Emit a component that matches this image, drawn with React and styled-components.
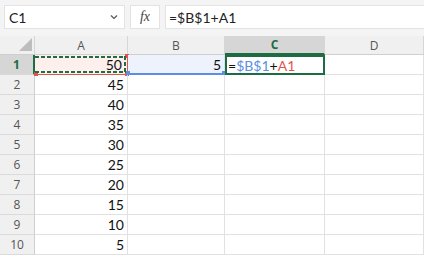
import React from 'react'
import styled, { createGlobalStyle, css } from 'styled-components'

const GREEN = '#1e6c41'
const BLUE = '#5b8ee6'
const RED = '#e4534b'
const GRID = '#e1e1e1'

const GlobalStyle = createGlobalStyle`
  html, body { margin: 0; padding: 0; background: #fff; }
  body { font-family: Lato, "Open Sans", "Liberation Sans", sans-serif; }
`

const Sheet = styled.div`
  width: 424px;
  height: 257px;
  overflow: hidden;
  background: #fff;
`

const Toolbar = styled.div`
  height: 36px;
  box-sizing: border-box;
  padding: 5px 0 7px 4px;
  background: #f4f4f4;
  display: flex;
  gap: 5px;
`

const Box = styled.div`
  background: #fff;
  border: 1px solid #e3e3e3;
  box-sizing: border-box;
  display: flex;
  align-items: center;
  font-size: 14px;
  color: #222;
`

const NameBox = styled(Box)`
  width: 121px;
  padding: 0 6px 0 4px;
  justify-content: space-between;
`

const FxBox = styled(Box)`
  width: 30px;
  justify-content: center;
  font-family: "Liberation Serif", serif;
  font-style: italic;
  font-size: 14px;
  color: #444;
`

const FormulaBox = styled(Box)`
  flex: 1;
  padding-left: 3px;
  border-right: none;
`

const Grid = styled.div`
  display: grid;
  grid-template-columns: 35px 93px 97px 100px 1fr;
  grid-template-rows: 19px repeat(10, 20px);
`

const Corner = styled.div`
  background: #f0f0f0;
  border-right: 1px solid #d6d6d6;
  border-bottom: 1px solid #cfcfcf;
  box-sizing: border-box;
  display: flex;
  align-items: flex-end;
  justify-content: flex-end;
  padding: 0 2px 3px 0;
`

const ColHead = styled.div`
  background: ${({ $active }) => ($active ? '#d6d6d6' : '#f0f0f0')};
  border-right: 1px solid #d6d6d6;
  border-bottom: ${({ $active }) => ($active ? `2px solid ${GREEN}` : '1px solid #cfcfcf')};
  box-sizing: border-box;
  display: flex;
  align-items: center;
  justify-content: center;
  font-family: "Open Sans", "Liberation Sans", sans-serif;
  font-size: 12px;
  color: ${({ $active }) => ($active ? GREEN : '#555')};
  font-weight: ${({ $active }) => ($active ? 700 : 400)};
`

const RowHead = styled.div`
  background: ${({ $active }) => ($active ? '#d6d6d6' : '#f0f0f0')};
  border-right: ${({ $active }) => ($active ? `2px solid ${GREEN}` : '1px solid #cfcfcf')};
  border-bottom: 1px solid #dadada;
  box-sizing: border-box;
  display: flex;
  align-items: center;
  justify-content: center;
  font-family: "Open Sans", "Liberation Sans", sans-serif;
  font-size: 12px;
  color: ${({ $active }) => ($active ? GREEN : '#555')};
  font-weight: ${({ $active }) => ($active ? 700 : 400)};
`

const Cell = styled.div`
  position: relative;
  border-right: 1px solid ${GRID};
  border-bottom: 1px solid ${GRID};
  box-sizing: border-box;
  display: flex;
  align-items: center;
  justify-content: ${({ $left }) => ($left ? 'flex-start' : 'flex-end')};
  padding: 0 3px;
  font-size: 14px;
  color: #111;

  ${({ $kind }) => $kind === 'copy' && css`
    background: #fcefec;
    border-right: 1px solid ${RED};
    border-bottom: 1px solid ${RED};
    padding-right: 5px;
    &::after {
      content: '';
      position: absolute;
      inset: 1px 1px 1px 0;
      background:
        repeating-linear-gradient(90deg, ${GREEN} 0 4px, transparent 4px 6px) top / 100% 2px no-repeat,
        repeating-linear-gradient(90deg, ${GREEN} 0 4px, transparent 4px 6px) bottom / 100% 2px no-repeat,
        repeating-linear-gradient(180deg, ${GREEN} 0 4px, transparent 4px 6px) right / 2px 100% no-repeat;
    }
  `}

  ${({ $kind }) => $kind === 'ref' && css`
    background: #edf2fc;
    border-bottom: 2px solid ${BLUE};
  `}

  ${({ $kind }) => $kind === 'active' && css`
    border: 2px solid ${GREEN};
    padding-left: 1px;
  `}
`

const Handle = styled.span`
  position: absolute;
  width: 4px;
  height: 4px;
  background: ${({ $color }) => $color};
  ${({ $pos }) => $pos}
`

const Blue = styled.span`color: ${BLUE};`
const Red = styled.span`color: ${RED};`

const values = [50, 45, 40, 35, 30, 25, 20, 15, 10, 5]

const App = () => (
  <Sheet>
    <GlobalStyle />
    <Toolbar>
      <NameBox>
        <span>C1</span>
        <svg width="8" height="6" viewBox="0 0 8 6">
          <path d="M1 1.5 L4 4.5 L7 1.5" fill="none" stroke="#555" strokeWidth="1.2" />
        </svg>
      </NameBox>
      <FxBox>fx</FxBox>
      <FormulaBox>=$B$1+A1</FormulaBox>
    </Toolbar>
    <Grid>
      <Corner>
        <svg width="13" height="13" viewBox="0 0 13 13">
          <polygon points="13,0 13,13 0,13" fill="#bdbdbd" />
        </svg>
      </Corner>
      <ColHead>A</ColHead>
      <ColHead>B</ColHead>
      <ColHead $active>C</ColHead>
      <ColHead>D</ColHead>
      {values.map((v, i) => (
        <React.Fragment key={i}>
          <RowHead $active={i === 0}>{i + 1}</RowHead>
          {i === 0 ? (
            <>
              <Cell $kind="copy">
                50
                <Handle $color={RED} $pos="top: -1px; right: -2px;" />
                <Handle $color={RED} $pos="bottom: -2px; right: -2px;" />
                <Handle $color={RED} $pos="bottom: -2px; left: -1px;" />
              </Cell>
              <Cell $kind="ref">
                5
                <Handle $color={BLUE} $pos="bottom: -2px; left: -2px;" />
                <Handle $color={BLUE} $pos="bottom: -2px; right: -2px;" />
              </Cell>
              <Cell $kind="active" $left>
                =<Blue>$B$1</Blue>+<Red>A1</Red>
              </Cell>
              <Cell />
            </>
          ) : (
            <>
              <Cell>{v}</Cell>
              <Cell />
              <Cell />
              <Cell />
            </>
          )}
        </React.Fragment>
      ))}
    </Grid>
  </Sheet>
)

export default App
